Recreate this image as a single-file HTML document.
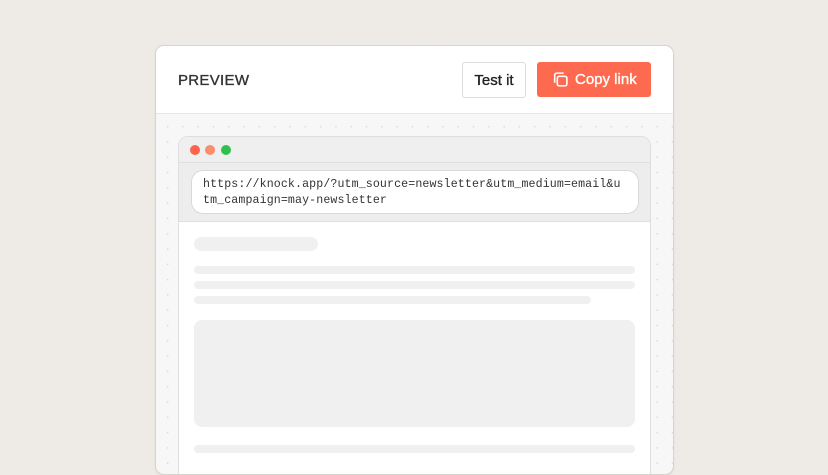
<!DOCTYPE html>
<html><head><style>
*{margin:0;padding:0;box-sizing:border-box}
body{width:828px;height:447px;overflow:hidden;background:#eeebe7;font-family:"Liberation Sans",sans-serif;position:relative}
.grid{position:absolute;left:20px;top:20px;width:790px;height:400px;background-image:linear-gradient(#e4e3e6 1px,transparent 1px),linear-gradient(90deg,#e6e4e4 1px,transparent 1px);background-size:38px 38px;opacity:.6;-webkit-mask-image:radial-gradient(ellipse at center,#000 20%,transparent 65%)}
.card{position:absolute;left:155px;top:45px;width:519px;height:430px;background:#f7f7f7;border:1px solid #d6d4d1;border-radius:9px;overflow:hidden;box-shadow:0 1px 3px rgba(0,0,0,.05)}
.hdr{height:68px;background:#fff;border-bottom:1px solid #e6e6e6;position:relative}
.ttl{position:absolute;left:22px;top:26px;font-size:15px;color:#333;letter-spacing:.3px;-webkit-text-stroke:.35px #333}
.test{position:absolute;left:306px;top:16px;width:64px;height:36px;border:1px solid #dcdcdc;border-radius:3px;font-size:15px;color:#222;text-align:center;line-height:36px;-webkit-text-stroke:.35px #222}
.copy{position:absolute;left:381px;top:16px;width:114px;height:35px;background:#fd6a4f;border-radius:3px;font-size:15px;color:#fff;line-height:36px;padding-left:38px;-webkit-text-stroke:.35px #fff}
.copy svg{position:absolute;left:15px;top:9px}
.dots{position:absolute;left:0;top:68px;right:0;bottom:0;background-image:radial-gradient(#dcdcdc .8px,transparent 1px);background-size:15.3px 15.3px;background-position:4px 5px}
.win{position:absolute;left:22px;top:90px;width:473px;height:360px;background:#fff;border:1px solid #dedede;border-radius:10px;overflow:hidden}
.tb{height:26px;background:#efefef;border-bottom:1px solid #e0e0e0;position:relative}
.d{position:absolute;top:8px;width:10px;height:10px;border-radius:50%}
.ub{height:59px;background:#ededed;border-bottom:1px solid #e0e0e0;position:relative}
.url{position:absolute;left:12px;top:7px;width:448px;height:44px;background:#fff;border:1px solid #d9d9d9;border-radius:12px;font-family:"Liberation Mono",monospace;font-size:11.6px;letter-spacing:.12px;color:#333;line-height:15.5px;padding:6px 0 0 11px;white-space:nowrap}
.s{position:absolute;background:#f0f0f0;border-radius:5px}
</style></head><body>
<div class="grid"></div>
<div class="card">
<div class="hdr"><div class="ttl">PREVIEW</div><div class="test">Test it</div>
<div class="copy"><svg width="17" height="17" viewBox="0 0 16 16" fill="none" stroke="#fff" stroke-width="1.5"><rect x="5" y="5" width="9" height="9" rx="1.8"/><path d="M2.5 11V4A2 2 0 0 1 4.5 2H11"/></svg>Copy link</div></div>
<div class="dots"></div>
<div class="win">
<div class="tb"><div class="d" style="left:11px;background:#fd634d"></div><div class="d" style="left:26px;background:#fc8c6b"></div><div class="d" style="left:42px;background:#30c04f"></div></div>
<div class="ub"><div class="url">https://knock.app/?utm_source=newsletter&amp;utm_medium=email&amp;u<br>tm_campaign=may-newsletter</div></div>
<div class="s" style="left:15px;top:100px;width:124px;height:14px;border-radius:7px"></div>
<div class="s" style="left:15px;top:129px;width:441px;height:8px;border-radius:4px"></div>
<div class="s" style="left:15px;top:144px;width:441px;height:8px;border-radius:4px"></div>
<div class="s" style="left:15px;top:159px;width:397px;height:8px;border-radius:4px"></div>
<div class="s" style="left:15px;top:183px;width:441px;height:107px;border-radius:8px"></div>
<div class="s" style="left:15px;top:308px;width:441px;height:8px;border-radius:4px"></div>
</div>
</div>
</body></html>
